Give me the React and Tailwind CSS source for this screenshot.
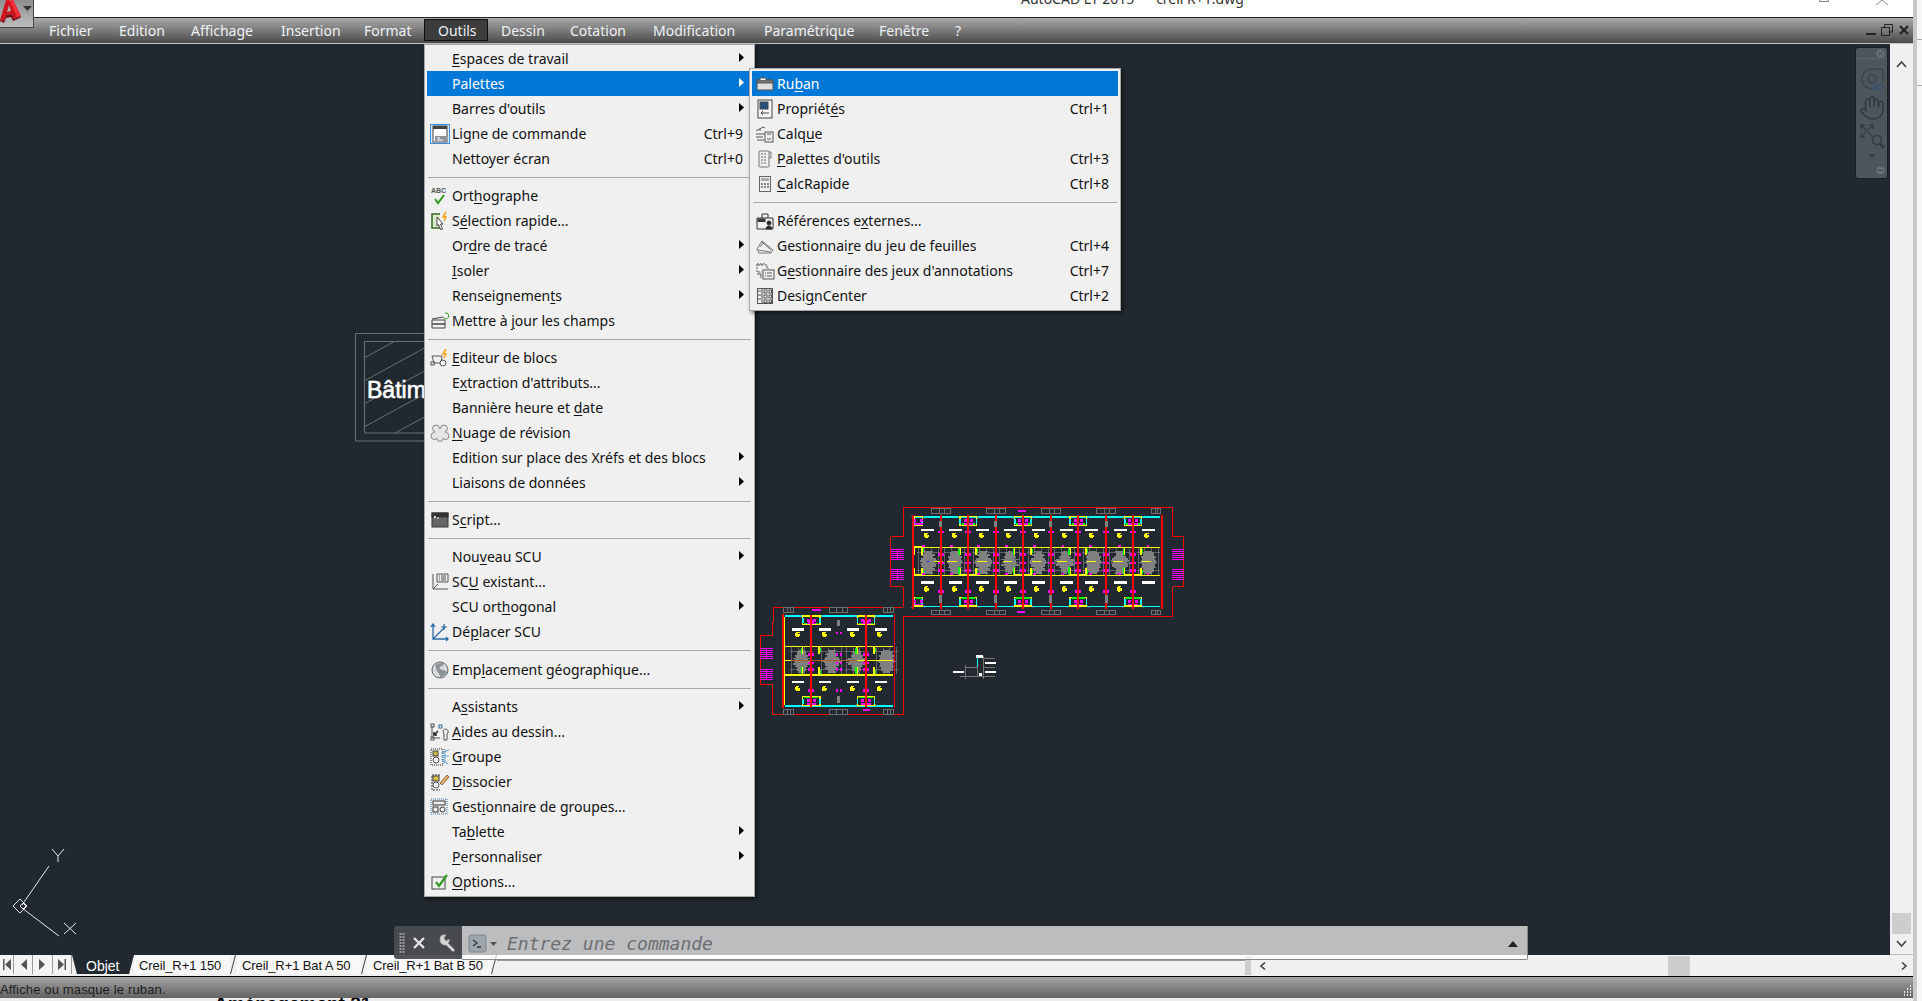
import React from "react";
import { Hand } from "lucide-react";

const FONT = "[font-family:'Noto_Sans','Open_Sans',sans-serif]";

function Label({ text }) {
  const i = text.indexOf("&");
  if (i < 0) return <span>{text}</span>;
  return (
    <span>
      {text.slice(0, i)}
      <u className="underline underline-offset-2 decoration-1">{text[i + 1]}</u>
      {text.slice(i + 2)}
    </span>
  );
}

const S = ({ children, stroke = "#555" }) => (
  <svg width="20" height="20" viewBox="0 0 20 20" fill="none" stroke={stroke} strokeWidth="1" className="block">
    {children}
  </svg>
);

const icons = {
  cmd: (
    <div className="w-[20px] h-[20px] border border-[#3a8ee0] bg-[#dfeaf5] flex items-center justify-center">
      <svg width="16" height="18" viewBox="0 0 16 18" fill="none" className="block">
        <rect x="1" y="1" width="14" height="16" fill="#fff" stroke="#444" />
        <rect x="1" y="1" width="14" height="3" fill="#444" />
        <rect x="3" y="11" width="11" height="5" fill="#8a9098" />
        <path d="M5 13h3M5 15h6" stroke="#fff" />
      </svg>
    </div>
  ),
  abc: (
    <S>
      <text x="1" y="7" fontSize="7" fontWeight="700" fill="#555" stroke="none" fontFamily="Liberation Sans">ABC</text>
      <path d="M5 13l3 4 6-8" stroke="#2e9a1e" strokeWidth="2" />
    </S>
  ),
  qsel: (
    <S>
      <path d="M10 3H2v14h8" stroke="#2f6b1d" strokeWidth="1.500" fill="#dcebd0" />
      <path d="M7 6l6 7-2.500 0 2 5-2 .5-2-5L7 15z" fill="#fff" stroke="#444" />
      <path d="M16 1l-3 5h3l-2 4" stroke="#f0a010" strokeWidth="1.500" />
    </S>
  ),
  field: (
    <S stroke="#444">
      <path d="M2 9h13v4H2zM2 13h13v4H2zM2 8l11-2" />
      <path d="M15 2a3 3 0 1 1-2 4" stroke="#3a9a2a" />
    </S>
  ),
  block: (
    <S>
      <path d="M2 8h10l-1 7H4zM2 15h3" />
      <circle cx="13" cy="15" r="3" fill="#f0f0f0" />
      <rect x="1" y="14" width="3" height="3" fill="#f0f0f0" />
      <path d="M16 1l-3 5h3l-2 4" stroke="#f0a010" strokeWidth="1.500" />
    </S>
  ),
  cloud: (
    <svg width="20" height="20" viewBox="0 0 20 20" className="block">
      <g fill="#e6e6e6" stroke="#888">
        <circle cx="6" cy="5.500" r="3.500" />
        <circle cx="14" cy="5.500" r="3.500" />
        <circle cx="4.500" cy="13" r="3.500" />
        <circle cx="15.500" cy="13" r="3.500" />
        <circle cx="10" cy="15.500" r="3" />
      </g>
      <rect x="5" y="6" width="10" height="9" fill="#e6e6e6" />
    </svg>
  ),
  script: (
    <S stroke="#333">
      <rect x="2" y="3" width="16" height="14" fill="#666" />
      <rect x="2" y="3" width="16" height="4" fill="#333" />
      <path d="M4 6l2 1-2 1M7 8h2" stroke="#fff" />
    </S>
  ),
  ucsl: (
    <S>
      <path d="M3 2v15h15M3 17l5-5" />
      <path d="M7 10V2h11v8zM9 4h1M11 4h5M9 6h1M11 6h5M9 8h1M11 8h5" />
    </S>
  ),
  ucsm: (
    <S stroke="#2b6ca8">
      <path d="M3 3v14h15M3 17L15 5M1 5l2-3 2 3M16 15l2 2-2 2" strokeWidth="1.300" />
      <path d="M14 2v6M11 5h6" strokeWidth="1.200" />
    </S>
  ),
  globe: (
    <S stroke="#666">
      <circle cx="10" cy="10" r="8" fill="#d6dbdd" />
      <path d="M5 5c3-2 7-3 9-1-1 2-3 2-4 3s1 3 3 3 3 1 4 2c-2 4-5 5-7 5 0-3-2-4-3-6s-1-4-2-6z" fill="#8d9497" stroke="none" />
    </S>
  ),
  aids: (
    <S>
      <path d="M2 4v12h8" />
      <rect x="1" y="2" width="3" height="3" />
      <rect x="1" y="15" width="3" height="3" />
      <path d="M4 13l4-4M4 10v3h3" stroke="#222" strokeWidth="1.500" />
      <rect x="9" y="3" width="3" height="3" stroke="#2b6ca8" />
      <path d="M13 9c1-3 5-2 5 0v2l-1 1v6h-3v-6z" stroke="#555" />
    </S>
  ),
  group: (
    <S>
      <rect x="1" y="2" width="12" height="16" strokeDasharray="1 1" stroke="#222" />
      <rect x="3" y="4" width="5" height="5" fill="#c9b84c" stroke="#444" />
      <circle cx="6" cy="13" r="3" />
      <path d="M11 6l8-3M11 9h8M11 12l7 5M15 2v14" stroke="#5aa0d8" />
    </S>
  ),
  ungroup: (
    <S>
      <path d="M10 3H2v15h8" stroke="#333" strokeDasharray="2 1" />
      <rect x="3" y="4" width="6" height="5" fill="#d8c040" stroke="#444" />
      <circle cx="6" cy="13" r="3" />
      <path d="M10 11l7-8 2 2-7 8z" fill="#e8b070" stroke="#8a6a3a" />
    </S>
  ),
  gmgr: (
    <S stroke="#333">
      <rect x="1" y="2" width="16" height="15" strokeDasharray="1 1" stroke="#3a6ea5" />
      <rect x="3" y="4" width="12" height="4" />
      <rect x="3" y="10" width="5" height="5" />
      <circle cx="12.500" cy="12.500" r="2.500" />
    </S>
  ),
  opts: (
    <S stroke="#444">
      <rect x="2" y="5" width="13" height="12" />
      <path d="M6 10l3 4 8-11" stroke="#2e9a1e" strokeWidth="2.200" />
    </S>
  ),
  ribbon: (
    <S stroke="#555">
      <rect x="2" y="6" width="16" height="10" fill="#ddd" />
      <rect x="2" y="6" width="16" height="3" fill="#777" />
      <path d="M5 6V4h6v2" fill="#fff" />
    </S>
  ),
  props: (
    <S stroke="#444">
      <rect x="3" y="1" width="14" height="18" fill="#f6f6f6" />
      <rect x="5" y="3" width="8" height="7" fill="#23527c" />
      <path d="M6 14h8M6 14l2-2M6 14l2 2" />
    </S>
  ),
  layer: (
    <S>
      <path d="M1 7l7-4 2 1M1 10h9M1 13h7M5 5v2M2 16h7" />
      <rect x="10" y="8" width="8" height="10" />
      <path d="M12 10h4M12 15h4" />
    </S>
  ),
  tools: (
    <S stroke="#777">
      <rect x="4" y="2" width="10" height="16" rx="1" />
      <path d="M14 3h2v6h-2" />
      <path d="M6 5h2M9 5h2M6 8h2M9 8h2M6 11h2M9 11h2M6 14h2M9 14h2" stroke="#aaa" strokeWidth="2" />
    </S>
  ),
  calc: (
    <S stroke="#666">
      <rect x="4.500" y="2.500" width="11" height="15" />
      <rect x="6" y="4" width="8" height="3" fill="#aaa" stroke="none" />
      <path d="M6 10h2M9 10h2M12 10h2M6 13h2M9 13h2M12 13h2" strokeWidth="1.300" />
    </S>
  ),
  xref: (
    <S stroke="#333">
      <path d="M2 7h16v11H2zM7 7V3h6v4" />
      <rect x="3" y="8" width="7" height="2.500" fill="#444" />
      <circle cx="14" cy="12" r="2" fill="#222" />
      <path d="M11 18c0-4 6-4 6 0z" fill="#222" />
    </S>
  ),
  sheet: (
    <S stroke="#777">
      <path d="M2 13L7 5l11 9-2 3H4z" />
      <path d="M5 11l3-4 8 7M3 14l13 2M6 5l3 3" />
    </S>
  ),
  anno: (
    <S>
      <path d="M2 3h9v3h2v2M2 3v8h5M4 3v2M7 3v2" strokeDasharray="2 1" />
      <rect x="8" y="9" width="11" height="9" />
      <path d="M10 12h1M12 12h5M10 15h1M12 15h5" />
      <path d="M2 13l4 0v4" />
    </S>
  ),
  dc: (
    <S stroke="#555">
      <rect x="2.500" y="2.500" width="15" height="15" />
      <path d="M7 2v16" />
      <path d="M3 5h3M3 9h3M3 13h3" />
      <rect x="9" y="4" width="3" height="3" />
      <rect x="14" y="4" width="2.500" height="3" />
      <rect x="9" y="9" width="3" height="3" />
      <rect x="14" y="9" width="2.500" height="3" />
      <rect x="9" y="14" width="3" height="2.500" />
      <rect x="14" y="14" width="2.500" height="2.500" />
    </S>
  ),
};

const outils = [
  [["&Espaces de travail", null, null, true], ["Palettes", null, null, true, true], ["Barres d'outils", null, null, true], ["Ligne de commande", "cmd", "Ctrl+9"], ["Nettoyer écran", null, "Ctrl+0"]],
  [["Ort&hographe", "abc"], ["S&élection rapide...", "qsel"], ["Or&dre de tracé", null, null, true], ["&Isoler", null, null, true], ["Renseignemen&ts", null, null, true], ["Mettre à &jour les champs", "field"]],
  [["&Editeur de blocs", "block"], ["E&xtraction d'attributs...", null], ["Bannière heure et &date", null], ["&Nuage de révision", "cloud"], ["Edition sur place des Xréfs et des blocs", null, null, true], ["Liaisons de données", null, null, true]],
  [["S&cript...", "script"]],
  [["Nou&veau SCU", null, null, true], ["SC&U existant...", "ucsl"], ["SCU ort&hogonal", null, null, true], ["Dé&placer SCU", "ucsm"]],
  [["Emp&lacement géographique...", "globe"]],
  [["A&ssistants", null, null, true], ["&Aides au dessin...", "aids"], ["&Groupe", "group"], ["&Dissocier", "ungroup"], ["Gest&ionnaire de groupes...", "gmgr"], ["Ta&blette", null, null, true], ["&Personnaliser", null, null, true], ["&Options...", "opts"]],
];

const palettes = [
  [["Ru&ban", "ribbon", null, false, true], ["Propriét&és", "props", "Ctrl+1"], ["Calq&ue", "layer"], ["&Palettes d'outils", "tools", "Ctrl+3"], ["&CalcRapide", "calc", "Ctrl+8"]],
  [["Références e&xternes...", "xref"], ["Gestionnai&re du jeu de feuilles", "sheet", "Ctrl+4"], ["G&estionnaire des jeux d'annotations", "anno", "Ctrl+7"], ["Desi&gnCenter", "dc", "Ctrl+2"]],
];

function Row({ item }) {
  const [t, ic, sc, sub, hi] = item;
  return (
    <div className={`h-[25px] flex items-center ${hi ? "bg-[#0078d7] text-white" : "text-[#111]"}`}>
      <div className="w-[25px] h-[25px] shrink-0 flex items-center justify-center">{ic && icons[ic]}</div>
      <div className="flex-1 whitespace-nowrap">
        <Label text={t} />
      </div>
      {sc && <div className="pr-[9px]">{sc}</div>}
      {sub && (
        <svg width="5" height="9" viewBox="0 0 5 9" className="mr-[8px] mb-[3px] block">
          <path d="M0 0l5 4.500L0 9z" fill={hi ? "#fff" : "#000"} />
        </svg>
      )}
    </div>
  );
}

function MenuGroups({ groups, tallAt }) {
  return groups.map((g, i) => (
    <React.Fragment key={i}>
      {i > 0 && (
        <div className={`${i === tallAt ? "h-[13px]" : "h-[12px]"} flex items-center px-[1px]`}>
          <div className="h-[1px] w-full bg-[#a8a8a8]" />
        </div>
      )}
      {g.map((it, j) => (
        <Row key={j} item={it} />
      ))}
    </React.Fragment>
  ));
}

const RED = "#ff0000", YEL = "#ffff00", CY = "#00ffff", MAG = "#ff00ff", GRN = "#00ff00", GRY = "#808080";

function Clutter({ cx, cy, n = 0 }) {
  const rows = [];
  for (let k = -8; k <= 8; k++) {
    const w = 6 + ((k * k * 7 + n * 5) % 11) + (8 - Math.abs(k)) * 1.800;
    rows.push(<rect key={k} x={cx - w} y={cy + k * 4} width={w * 2} height={4} fill={GRY} />);
  }
  const lines = [];
  for (let k = 0; k < 4; k++) {
    lines.push(<path key={k} d={`M${cx - 30 + k * 20} ${cy - 40}V${cy + 40}`} stroke={GRY} strokeWidth="2" />);
  }
  return (
    <g>
      {rows}
      {lines}
      <path d={`M${cx - 34} ${cy - 26}H${cx + 34}M${cx - 34} ${cy + 26}H${cx + 34}`} stroke={GRY} strokeWidth="2" />
      <rect x={cx - 3} y={cy - 2} width="5" height="4" fill="#2020ff" />
    </g>
  );
}

function Bay({ x, y, w, h, flip }) {
  return (
    <g>
      <path d={`M${x - 8} ${flip ? y + h + 6 : y - 2}l8 ${flip ? -10 : 10}M${x + w + 8} ${flip ? y + h + 6 : y - 2}l-8 ${flip ? -10 : 10}`} stroke={GRY} strokeWidth="2" />
      <rect x={x} y={y} width={w} height={h} fill="none" stroke={YEL} strokeWidth="4" />
      <rect x={x + 5} y={flip ? y : y + h - 6} width={w - 10} height="5" fill={GRN} />
      <rect x={x - 2} y={y + 6} width="5" height={h - 10} fill={CY} />
      <rect x={x + w - 3} y={y + 6} width="5" height={h - 10} fill={CY} />
      <rect x={x + w / 2 - 14} y={y + 8} width="9" height="9" fill={MAG} />
      <rect x={x + w / 2 + 5} y={y + 8} width="9" height="9" fill={MAG} />
      <rect x={x + w / 2 - 14} y={y + 20} width="28" height="4" fill={MAG} />
    </g>
  );
}

function MidBox({ x, y, w, h }) {
  return (
    <g>
      <path d={`M${x} ${y + 22}V${y}H${x + w}V${y + 22}M${x} ${y + h - 22}V${y + h}H${x + w}V${y + h - 22}`} fill="none" stroke={YEL} strokeWidth="5" />
      <rect x={x - 6} y={y + 3} width="5" height="20" fill={GRN} />
      <rect x={x - 6} y={y + h - 23} width="5" height="20" fill={GRN} />
      <rect x={x + w + 2} y={y + 3} width="4" height="12" fill={GRN} />
      <rect x={x + w + 2} y={y + h - 15} width="4" height="12" fill={GRN} />
    </g>
  );
}

function Stairs({ x, y, w = 40 }) {
  const l = [];
  for (let i = 0; i < 6; i++) l.push(<rect key={i} x={x} y={y + i * 6} width={w} height="2" fill={MAG} />);
  return (
    <g>
      {l}
      <rect x={x + w / 2 - 1} y={y} width="2" height="31" fill={MAG} />
    </g>
  );
}

function Win({ x, y, w, h }) {
  return (
    <g fill="none" stroke="#6e6e6e" strokeWidth="3">
      <rect x={x} y={y} width={w} height={h} />
      <path d={`M${x + w * 0.4} ${y}v${h}M${x + w * 0.7} ${y}v${h}`} />
    </g>
  );
}

function Dot({ x, y }) {
  return (
    <g>
      <circle cx={x} cy={y} r="8" fill={YEL} />
      <rect x={x + 2} y={y - 5} width="6" height="3" fill="#212830" />
    </g>
  );
}

function Plan() {
  const cols = [542, 624, 707, 788, 872, 954, 1038, 1118];
  const whites = [483, 567, 648, 732, 816, 900, 975, 1062, 1146];
  const circ = [499, 583, 664, 745, 829, 913, 994, 1078, 1160];
  const cl = [505, 585, 670, 750, 835, 915, 1000, 1080, 1165];
  const bays = [600, 764, 930, 1094];
  const scols = [153, 318];
  const swh = [96, 177, 261, 344];
  const sci = [113, 193, 277, 358];
  const scl = [110, 200, 275, 365];
  return (
    <g transform="translate(760 490) scale(0.33333)" shapeRendering="crispEdges">
      <path d="M430 352V290H392V140H430V52H1238V140H1272V290H1238V380H430V674H38V585H0V437H38V396H40V352Z" fill="none" stroke={RED} strokeWidth="3" />
      {[515, 680, 845, 1010].map((x) => (
        <g key={x}>
          <Win x={x} y={55} w={57} h={16} />
          <Win x={x} y={361} w={57} h={13} />
        </g>
      ))}
      <Win x={1175} y={55} w={27} h={16} />
      <Win x={1175} y={361} w={27} h={13} />
      <rect x="775" y="60" width="23" height="5" fill={MAG} />
      <rect x="771" y="363" width="24" height="5" fill={MAG} />
      <Stairs x={392} y={178} /><Stairs x={392} y={238} /><Stairs x={1237} y={178} w={35} /><Stairs x={1237} y={238} w={35} />
      {cl.map((x, i) => <Clutter key={x} cx={x} cy={215} n={i} />)}
      <rect x="460" y="79" width="740" height="4" fill={CY} />
      <rect x="460" y="349" width="740" height="3" fill={CY} />
      <rect x="460" y="171" width="740" height="4" fill={YEL} />
      <rect x="460" y="255" width="740" height="4" fill={YEL} />
      {[522, 562, 652, 728, 815, 892, 980, 1060, 1145].map((x) => (
        <rect key={x} x={x} y="212" width="28" height="4" fill={YEL} />
      ))}
      <Bay x={462} y={80} w={25} h={26} /><Bay x={462} y={322} w={25} h={26} flip />
      <MidBox x={462} y={172} w={25} h={84} />
      {bays.map((x) => (
        <g key={x}>
          <Bay x={x} y={80} w={50} h={26} />
          <Bay x={x} y={322} w={50} h={26} flip />
          <MidBox x={x} y={173} w={49} h={82} />
        </g>
      ))}
      {whites.map((x, i) => (
        <g key={x}>
          <rect x={x} y={118} width="38" height="5" fill="#fff" />
          <rect x={x} y={274} width="38" height="8" fill="#fff" />
        </g>
      ))}
      {circ.map((x, i) => (
        <g key={x}>
          <Dot x={x} y={136} />
          {i < 8 && <Dot x={x} y={297} />}
        </g>
      ))}
      {cols.map((x, i) => (
        <g key={x}>
          <rect x={x - 3} y={76} width="6" height="280" fill={RED} />
          {[122, 190, 215, 238, 300].map((y) => (
            <g key={y}>
              <rect x={x - 9} y={y} width="6" height="8" fill={MAG} />
              <rect x={x + 3} y={y} width="6" height="8" fill={MAG} />
            </g>
          ))}
          {i % 2 === 0 && <rect x={x - 4} y={94} width="9" height="18" fill={GRY} />}
          {i % 2 === 0 && <rect x={x - 4} y={316} width="9" height="22" fill={GRY} />}
        </g>
      ))}
      {[486, 570, 652, 735, 820, 905, 988, 1075, 1160].map((x) => (
        <g key={x}>
          <rect x={x} y={166} width="8" height="5" fill={MAG} />
          <rect x={x} y={250} width="8" height="5" fill={MAG} />
        </g>
      ))}
      <rect x="456" y="76" width="5" height="280" fill={RED} />
      <rect x="1203" y="76" width="5" height="280" fill={RED} />

      {[[72, 29], [208, 56], [372, 29]].map(([x, w]) => (
        <g key={x}>
          <Win x={x} y={353} w={w} h={15} />
          <Win x={x} y={658} w={w} h={15} />
        </g>
      ))}
      <rect x="156" y="357" width="27" height="5" fill={MAG} />
      <rect x="308" y="657" width="22" height="5" fill={MAG} />
      <Stairs x={0} y={475} w={38} /><Stairs x={0} y={538} w={38} />
      {scl.map((x, i) => <Clutter key={x} cx={x + 15} cy={512} n={i + 3} />)}
      <rect x="75" y="376" width="325" height="4" fill={CY} />
      <rect x="75" y="646" width="325" height="4" fill={CY} />
      <rect x="75" y="468" width="325" height="4" fill={YEL} />
      <rect x="75" y="553" width="325" height="4" fill={YEL} />
      <rect x="75" y="510" width="325" height="4" fill={YEL} />
      <rect x="92" y="511" width="200" height="2" fill="#b05a20" />
      {[128, 292].map((x) => (
        <g key={x}>
          <Bay x={x} y={378} w={52} h={26} />
          <Bay x={x} y={620} w={52} h={26} flip />
          <MidBox x={x} y={470} w={50} h={84} />
        </g>
      ))}
      {swh.map((x) => (
        <g key={x}>
          <rect x={x} y={415} width="36" height="7" fill="#fff" />
          <rect x={x} y={573} width="36" height="7" fill="#fff" />
        </g>
      ))}
      {sci.map((x) => (
        <g key={x}>
          <Dot x={x} y={433} />
          <Dot x={x} y={596} />
        </g>
      ))}
      {scols.map((x) => (
        <g key={x}>
          <rect x={x - 3} y={374} width="6" height="278" fill={RED} />
          {[390, 490, 515, 535, 598].map((y) => (
            <g key={y}>
              <rect x={x - 9} y={y} width="6" height="8" fill={MAG} />
              <rect x={x + 3} y={y} width="6" height="8" fill={MAG} />
            </g>
          ))}
        </g>
      ))}
      <rect x="232" y="390" width="8" height="18" fill={GRY} />
      <rect x="232" y="618" width="8" height="20" fill={GRY} />
      {[425, 490, 515, 535, 598].map((y) => (
        <g key={y}>
          <rect x="227" y={y} width="6" height="8" fill={MAG} />
          <rect x="239" y={y} width="6" height="8" fill={MAG} />
        </g>
      ))}
      <rect x="67" y="372" width="5" height="282" fill={RED} />
      <rect x="401" y="372" width="5" height="282" fill={RED} />
      <rect x="72" y="380" width="3" height="266" fill={YEL} />

      <rect x="648" y="495" width="21" height="9" fill="#fff" />
      <rect x="675" y="516" width="33" height="6" fill="#fff" />
      <rect x="675" y="543" width="33" height="6" fill="#fff" />
      <rect x="579" y="543" width="33" height="6" fill="#fff" />
      <rect x="657" y="549" width="9" height="9" fill="#fff" />
      <rect x="651" y="504" width="3" height="30" fill={CY} />
      <path d="M672 507H705M672 498V567M672 534H705M600 560H705M618 526V567M618 534H654V558" fill="none" stroke="#777" strokeWidth="3" />
    </g>
  );
}

function Drawing() {
  const hatch = [];
  for (let i = -3; i < 8; i++) {
    const y = 341 + i * 23;
    hatch.push(<line key={i} x1="364" y1={y + 40} x2="430" y2={y + 4} />);
  }
  return (
    <svg width="1890" height="911" viewBox="0 44 1890 911" className="absolute left-0 top-0 block">
      <defs>
        <clipPath id="inner">
          <rect x="364" y="341" width="70" height="92" />
        </clipPath>
      </defs>
      <g stroke="#6d6f72" fill="none">
        <path d="M430 333.500H355.500V441H430M430 341.500H364.500V433H430" />
        <g clipPath="url(#inner)">{hatch}</g>
      </g>
      <text x="367" y="398" fill="#fff" fontSize="23" fontFamily="Liberation Sans, sans-serif" stroke="#fff" strokeWidth="0.6">Bâtim</text>
      <Plan />
      <g stroke="#e8e8e8" fill="none">
        <path d="M22 905L49 866M22 908L59 936" />
        <path d="M20 899l7 7-7 7-7-7zM23 903l3 3-3 3-3-3z" />
        <path d="M52 849l6 7 6-7M58 856v6M64 923l12 11M64 934l12-11" />
      </g>
    </svg>
  );
}

function NavBar() {
  return (
    <div className="absolute left-[1855px] top-[3px] w-[33px] h-[132px] rounded-[3px] bg-[#4d555d] border border-[#1a1e23] flex flex-col items-center">
      <div className="w-full h-[11px] border-b border-[#5b636b] flex justify-end pr-[2px] pt-[1px]">
        <svg width="9" height="9" viewBox="0 0 9 9" className="block">
          <circle cx="4.500" cy="4.500" r="4" fill="#6a7178" />
          <path d="M2.500 2.500l4 4M6.500 2.500l-4 4" stroke="#3a4047" />
        </svg>
      </div>
      <svg width="26" height="28" viewBox="0 0 26 28" className="block mt-[7px]">
        <path d="M13 3h8a3 3 0 0 1 3 3v10M13 3a10 10 0 1 0 0 20h3" fill="none" stroke="#3c434a" strokeWidth="1.500" />
        <circle cx="13" cy="13" r="4" fill="none" stroke="#3c434a" strokeWidth="1.500" />
        <text x="13" y="24" fill="#2f4f7a" fontSize="9" fontFamily="Liberation Sans, sans-serif">2D</text>
      </svg>
      <Hand size={26} strokeWidth={1.500} color="#343a41" className="mt-[1px]" />
      <svg width="26" height="26" viewBox="0 0 26 26" className="block mt-[2px]">
        <path d="M2 2l12 12M14 2L2 14M2 2h4M2 2v4M14 2h-4M14 2v4M2 14h4M2 14v-4" fill="none" stroke="#343a41" strokeWidth="1.300" />
        <circle cx="18" cy="17" r="4.500" fill="none" stroke="#343a41" strokeWidth="1.500" />
        <path d="M21 21l4 4" stroke="#343a41" strokeWidth="2.500" />
      </svg>
      <svg width="6" height="4" viewBox="0 0 6 4" className="block mt-[5px]">
        <path d="M0 0h6L3 4z" fill="#343a41" />
      </svg>
      <div className="flex-1" />
      <svg width="9" height="9" viewBox="0 0 9 9" className="block self-end mr-[2px] mb-[3px]">
        <circle cx="4.500" cy="4.500" r="4" fill="#6a7178" />
        <path d="M2 4.500h5" stroke="#3a4047" />
      </svg>
    </div>
  );
}

const Chev = ({ d }) => (
  <svg width="11" height="8" viewBox="0 0 11 8" className="block">
    <path d={d} fill="none" stroke="#444" strokeWidth="1.600" />
  </svg>
);

function NavBtn({ bar, flip, w }) {
  return (
    <div className={`${w} h-full flex items-center justify-center border-r border-[#9a9a9a]`}>
      <svg width="8" height="11" viewBox="0 0 8 11" className={`block ${flip ? "-scale-x-100" : ""}`}>
        {bar && <rect x="0" y="0" width="1.500" height="11" fill="#555" />}
        <path d="M8 0v11L2 5.500z" fill="#555" />
      </svg>
    </div>
  );
}

const Slant = () => (
  <svg width="6" height="19" viewBox="0 0 6 19" className="block shrink-0">
    <path d="M0 19h6V0H5z" fill="#f0f0f0" />
    <path d="M5.500 0L0.500 19" stroke="#444" />
  </svg>
);

const menus = [
  ["Fichier", "w-[70px]"],
  ["Edition", "w-[72px]"],
  ["Affichage", "w-[90px]"],
  ["Insertion", "w-[83px]"],
  ["Format", "w-[73px]"],
  ["Outils", "w-[64px] pl-[12px] bg-[#3c3c3c] border border-[#111] mt-[1px] mb-[2px]"],
  ["Dessin", "w-[69px]"],
  ["Cotation", "w-[83px]"],
  ["Modification", "w-[111px]"],
  ["Paramétrique", "w-[115px]"],
  ["Fenêtre", "w-[76px]"],
  ["?", "w-[30px]"],
];

export default function App() {
  return (
    <div className={`relative w-full h-screen overflow-hidden flex bg-white text-[14px] ${FONT}`}>
      <div className="w-[1913px] flex flex-col shrink-0">
        <div className="h-[18px] shrink-0 bg-white border-b border-[#222] relative overflow-hidden flex">
          <div className="ml-[1021px] -mt-[11px] text-[14px] text-[#333] whitespace-pre leading-[20px]">AutoCAD LT 2015      creil R+1.dwg</div>
          <div className="absolute left-[1819px] -top-[8px] w-[10px] h-[10px] border border-[#888]" />
          <svg width="12" height="5" viewBox="0 0 12 5" className="absolute left-[1876px] top-0 block">
            <path d="M0 5L6 0M12 5L6 0" stroke="#888" />
          </svg>
        </div>

        <div className="h-[26px] shrink-0 bg-gradient-to-b from-[#ababab] to-[#4b4b4b] border-b border-[#c4c4c4] flex items-stretch pl-[36px] text-[#eef2f6]">
          {menus.map(([m, cls]) => (
            <div key={m} className={`flex items-center whitespace-nowrap pl-[13px] ${cls}`}>
              {m}
            </div>
          ))}
          <div className="flex-1" />
          <div className="flex items-center gap-[5px] pr-[4px] pb-[1px]">
            <div className="w-[10px] h-[2px] bg-[#222] mt-[8px]" />
            <svg width="12" height="12" viewBox="0 0 12 12" className="block">
              <path d="M3.500 3V.5h8V8H9M.5 3.500h8v8h-8z" fill="none" stroke="#222" />
            </svg>
            <svg width="10" height="10" viewBox="0 0 10 10" className="block ml-[1px]">
              <path d="M1 1l8 8M9 1L1 9" stroke="#222" strokeWidth="2.200" />
            </svg>
          </div>
        </div>

        <div className="flex-1 flex min-h-0">
          <div className="flex-1 relative bg-[#212830]">
            <Drawing />
            <NavBar />
          </div>
          <div className="w-[23px] shrink-0 bg-[#f0f0f0] flex flex-col items-center border-b border-[#bbb]">
            <div className="h-[24px] flex items-end">
              <Chev d="M1 7L5.500 2 10 7" />
            </div>
            <div className="flex-1" />
            <div className="w-[19px] h-[21px] bg-[#cdcdcd]" />
            <div className="h-[20px] flex items-center pb-[1px]">
              <Chev d="M1 1L5.500 6 10 1" />
            </div>
          </div>
        </div>

        <div className="h-[21px] shrink-0 bg-[#f0f0f0] flex text-[13px] [font-family:'Liberation_Sans',sans-serif] tracking-[-0.1px]">
          <div className="w-[72px] h-[19px] flex shrink-0 bg-[#f4f4f4]">
            <NavBtn bar w="w-[14px]" />
            <NavBtn w="w-[19px]" />
            <NavBtn flip w="w-[20px]" />
            <NavBtn bar flip w="w-[19px]" />
          </div>
          <div className="w-[62px] h-[19px] shrink-0 bg-[#212830] text-white text-[14px] tracking-normal pl-[14px] leading-[22px] [clip-path:polygon(0_0,100%_0,92%_100%,8%_100%)]">Objet</div>
          <div className="w-[96px] h-[19px] shrink-0 pl-[5px] bg-[#f8f8f8] text-[#111] leading-[22px] whitespace-nowrap">Creil_R+1 150</div>
          <Slant />
          <div className="w-[125px] h-[19px] shrink-0 pl-[6px] bg-[#f8f8f8] text-[#111] leading-[22px] whitespace-nowrap">Creil_R+1 Bat A 50</div>
          <Slant />
          <div className="w-[124px] h-[19px] shrink-0 pl-[6px] bg-[#f8f8f8] text-[#111] leading-[22px] whitespace-nowrap">Creil_R+1 Bat B 50</div>
          <Slant />
          <div className="w-[748px] shrink-0 flex flex-col">
            <div className="h-[2px] bg-[#f0f0f0]" />
            <div className="h-[3px] bg-white" />
            <div className="h-[1px] bg-[#999]" />
          </div>
          <div className="w-[6px] shrink-0 bg-[#cdcdcd] mt-[1px] mb-[1px]" />
          <div className="flex-1 flex items-center relative pl-[7px] pr-[4px]">
            <Chev d="M7 0.500L3 4 7 7.500" />
            <div className="ml-[399px] w-[22px] h-[20px] bg-[#cdcdcd]" />
            <div className="flex-1" />
            <Chev d="M4 0.500L8 4 4 7.500" />
          </div>
        </div>

        <div className="h-[1px] shrink-0 bg-black" />
        <div className="h-[21px] shrink-0 bg-gradient-to-b from-[#a4a4a4] to-[#636363] flex items-center pt-[5px] text-[13px] text-[#1c1c1c] [font-family:'Liberation_Sans',sans-serif] relative">
          <span className="tracking-[0.15px]">Affiche ou masque le ruban.</span>
          <svg width="10" height="14" viewBox="0 0 10 14" className="absolute right-0 bottom-0 block">
            <path d="M7 2h2M7 5h2M4 5h2M7 8h2M4 8h2M1 8h2M4 11h2M7 11h2M1 11h2" stroke="#eee" strokeDasharray="1 1" strokeWidth="2" />
          </svg>
        </div>
        <div className="h-[3px] shrink-0 bg-[#ececec] overflow-hidden pl-[214px] text-[19px] leading-[11px] font-bold text-black whitespace-nowrap [font-family:'Liberation_Sans',sans-serif]">Aménagement 21</div>
      </div>

      <div className="flex-1 flex">
        <div className="w-[4px] bg-[#c8c8c8]" />
        <div className="flex-1 bg-[#f6f6f6] flex flex-col">
          <div className="h-[40px] border-b border-[#aaa]" />
          <div className="h-[46px] border-b border-[#aaa]" />
        </div>
      </div>

      {/* logo */}
      <div className="absolute left-0 top-0 w-[34px] h-[28px] bg-gradient-to-b from-[#8e8e8e] to-[#bdbdbd] border-r border-b border-[#444] overflow-hidden">
        <svg width="34" height="28" viewBox="0 0 34 28" className="block">
          <path d="M0 20L6 0H13L21 16 14 19 12 14 6 15 4 21Z" fill="#d0141e" />
          <path d="M6 0H13L21 16 17 17 10 1Z" fill="#f0323a" />
          <path d="M0 20l4 1 2-6 6-1 2 5 7-3-1 2-7 3-2-4-5 1-2 5-4-2z" fill="#7a0a10" />
          <path d="M9 5l2 6-4 1z" fill="#b8a8a0" />
          <path d="M23 6h9l-4.500 5z" fill="#333" />
        </svg>
      </div>

      {/* Outils menu */}
      <div className="absolute left-[424px] top-[44px] w-[331px] h-[853px] bg-[#f0f0f0] border border-[#a8a8a8] pl-[2px] pr-[2px] pt-[1px] shadow-[2px_2px_4px_rgba(0,0,0,0.5)] text-[#111]">
        <MenuGroups groups={outils} tallAt={5} />
      </div>

      {/* Palettes submenu */}
      <div className="absolute left-[749px] top-[68px] w-[372px] h-[243px] bg-[#f0f0f0] border border-[#a8a8a8] pl-[2px] pr-[2px] pt-[2px] shadow-[2px_2px_4px_rgba(0,0,0,0.5)]">
        <MenuGroups groups={palettes} />
      </div>

      {/* command line */}
      <div className="absolute left-[394px] top-[926px] w-[1134px] h-[34px] flex">
        <div className="w-[68px] h-[33px] shrink-0 bg-[#4a4d50]/95 rounded-l-[3px] flex items-center pl-[5px]">
          <svg width="6" height="22" viewBox="0 0 6 22" className="block">
            <path d="M1.500 1v20M4.500 1v20" stroke="#9a9c9e" strokeWidth="2" strokeDasharray="2 1" />
          </svg>
          <svg width="14" height="14" viewBox="0 0 14 14" className="block ml-[7px]">
            <path d="M2 2l10 10M12 2L2 12" stroke="#e4e4e4" strokeWidth="2.400" />
          </svg>
          <svg width="20" height="20" viewBox="0 0 20 20" className="block ml-[12px]">
            <path d="M2 5c0-3 4-4 6-3L6 5l2 3 3-2c1 2 0 4-1 4l7 7-2 2-7-7c-3 1-6-2-6-4z" fill="#d4d4d4" stroke="#888" strokeWidth="0.7" />
          </svg>
        </div>
        <div className="flex-1 flex flex-col border-r border-b border-[#8a8a8a] rounded-br-[2px]">
          <div className="h-[29px] bg-[#bcbdbf] flex items-center pt-[6px] pl-[6px] pr-[9px]">
            <svg width="19" height="19" viewBox="0 0 19 19" className="block">
              <rect x="1" y="1" width="17" height="17" rx="2" fill="#9ea6ad" stroke="#7d858c" />
              <path d="M5 6l4 3-4 3M9 13h4" fill="none" stroke="#333" strokeWidth="1.300" />
            </svg>
            <svg width="7" height="4" viewBox="0 0 7 4" className="block ml-[3px]">
              <path d="M0 0h7L3.500 4z" fill="#555" />
            </svg>
            <span className="ml-[10px] text-[18px] leading-[24px] italic text-[#6d6e70] whitespace-pre [font-family:'DejaVu_Sans_Mono',monospace]">Entrez une commande</span>
            <div className="flex-1" />
            <svg width="10" height="6" viewBox="0 0 10 6" className="block">
              <path d="M0 6h10L5 0z" fill="#222" />
            </svg>
          </div>
          <div className="flex-1 bg-white/70" />
        </div>
      </div>
    </div>
  );
}
